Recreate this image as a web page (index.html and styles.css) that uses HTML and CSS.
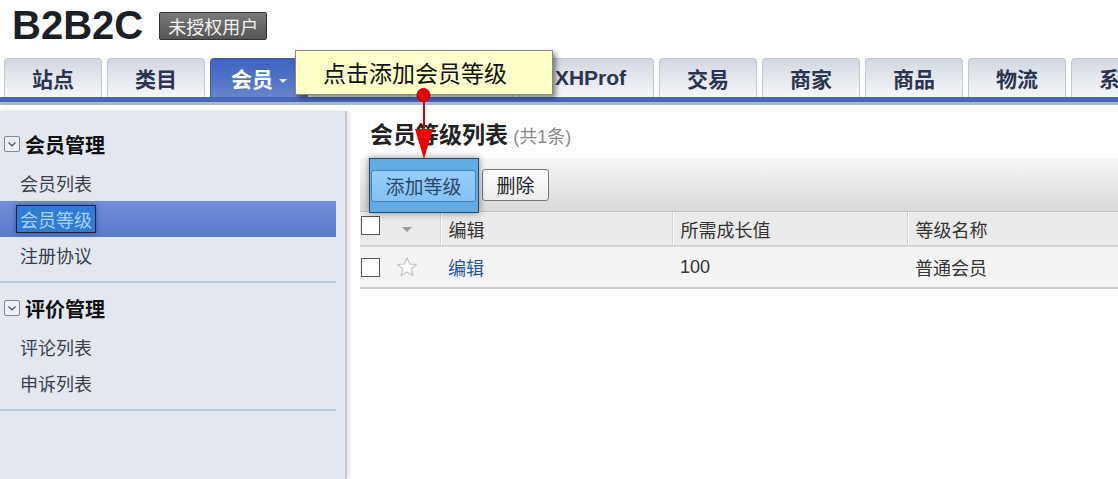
FILE: index.html
```html
<!DOCTYPE html>
<html lang="zh-CN">
<head>
<meta charset="utf-8">
<title>B2B2C 会员等级</title>
<link rel="stylesheet" href="styles.css">
</head>
<body>
<div class="page">
  <header class="top">
    <h1 class="logo">B2B2C</h1>
    <span class="badge">未授权用户</span>
  </header>

  <nav class="tabs">
    <a class="tab">站点</a>
    <a class="tab">类目</a>
    <a class="tab active">会员<span class="caret"></span></a>
    <a class="tab"></a>
    <a class="tab"></a>
    <a class="tab wide">XHProf</a>
    <a class="tab">交易</a>
    <a class="tab">商家</a>
    <a class="tab">商品</a>
    <a class="tab">物流</a>
    <a class="tab">系统</a>
  </nav>
  <div class="band"></div>
  <div class="band-light"></div>

  <div class="layout">
    <aside class="side">
      <div class="group">
        <div class="group-head">
          <svg class="toggle" width="16" height="16" viewBox="0 0 16 16"><rect x="0.5" y="0.5" width="15" height="15" rx="1.5" fill="#eef0f6" stroke="#7d86a3"/><path d="M4.5 6.5 L8 9.8 L11.5 6.5" fill="none" stroke="#4f5a78" stroke-width="1.4"/></svg>
          <span>会员管理</span>
        </div>
        <div class="item">会员列表</div>
        <div class="item selected"><span class="sel-text">会员等级</span></div>
        <div class="item">注册协议</div>
      </div>
      <div class="group">
        <div class="group-head">
          <svg class="toggle" width="16" height="16" viewBox="0 0 16 16"><rect x="0.5" y="0.5" width="15" height="15" rx="1.5" fill="#eef0f6" stroke="#7d86a3"/><path d="M4.5 6.5 L8 9.8 L11.5 6.5" fill="none" stroke="#4f5a78" stroke-width="1.4"/></svg>
          <span>评价管理</span>
        </div>
        <div class="item">评论列表</div>
        <div class="item">申诉列表</div>
      </div>
    </aside>

    <main class="main">
      <h2 class="title">会员等级列表 <span class="count">(共1条)</span></h2>
      <div class="toolbar">
        <span class="highlight"><button class="btn btn-add">添加等级</button></span>
        <button class="btn btn-del">删除</button>
      </div>
      <table class="grid">
        <colgroup>
          <col class="c-sel"><col class="c-edit"><col class="c-val"><col>
        </colgroup>
        <thead>
          <tr>
            <th class="sel"><span class="cb cb-head"></span><span class="sort"></span></th>
            <th>编辑</th>
            <th>所需成长值</th>
            <th>等级名称</th>
          </tr>
        </thead>
        <tbody>
          <tr>
            <td class="sel"><span class="cb"></span><svg class="star" width="22" height="22" viewBox="0 0 22 22"><path d="M11 1.8 L13.7 8 L20.4 8.5 L15.3 12.9 L16.9 19.6 L11 16 L5.1 19.6 L6.7 12.9 L1.6 8.5 L8.3 8 Z" fill="#fdfdfd" stroke="#c4c4c4" stroke-width="1.2" stroke-linejoin="round"/></svg></td>
            <td><a class="link">编辑</a></td>
            <td>100</td>
            <td>普通会员</td>
          </tr>
        </tbody>
      </table>
    </main>
  </div>

  <div class="tip">点击添加会员等级</div>
  <svg class="pointer" width="24" height="80" viewBox="0 0 24 80">
    <line x1="12" y1="8" x2="12" y2="46" stroke="#e00000" stroke-width="2"/>
    <polygon points="3,42 21,42 12,72" fill="#ee0000"/>
    <circle cx="11.5" cy="8" r="6.5" fill="#e60000" stroke="#b00000" stroke-width="1"/>
  </svg>
</div>
</body>
</html>
```

FILE: styles.css
```css
* { box-sizing: border-box; }

html, body {
  margin: 0;
  padding: 0;
  background: #fff;
}

body {
  font-family: "Liberation Sans", "Noto Sans CJK SC", sans-serif;
  color: #333;
  overflow: hidden;
}

.page {
  position: relative;
  width: 1118px;
  height: 479px;
  overflow: hidden;
}

/* header */
.top {
  display: flex;
  align-items: center;
  height: 58px;
  padding: 5px 0 13px 12px;
}

.logo {
  margin: 0;
  font-family: "Liberation Sans", sans-serif;
  font-size: 40px;
  line-height: 40px;
  font-weight: bold;
  color: #1c1f26;
}

.badge {
  margin-left: 16px;
  margin-top: 2px;
  height: 28px;
  padding: 0 8px;
  font-family: "Noto Sans CJK SC", sans-serif;
  font-size: 18px;
  line-height: 26px;
  color: #f2f2f2;
  background: linear-gradient(#7a7a7a, #555);
  border: 1px solid #333;
  border-radius: 2px;
}

/* tabs */
.tabs {
  display: flex;
  gap: 5px;
  height: 39px;
  padding-left: 4px;
  overflow: hidden;
}

.tab {
  flex: 0 0 98px;
  height: 39px;
  border: 1px solid #c2c8d2;
  border-bottom: none;
  border-radius: 4px 4px 0 0;
  background: linear-gradient(#d2d8e1, #e6e9ef 55%, #f5f6f8);
  font-family: "Noto Sans CJK SC", sans-serif;
  font-size: 21px;
  font-weight: bold;
  line-height: 38px;
  text-align: center;
  color: #2b3450;
  white-space: nowrap;
}

.tab.wide {
  flex-basis: 135px;
  font-family: "Liberation Sans", sans-serif;
  font-size: 21px;
  padding-left: 8px;
}

.tab.active {
  background: linear-gradient(#3e62c0, #5475c8 60%, #6684cc);
  border-color: #3b5bb2;
  color: #fff;
}

.caret {
  display: inline-block;
  margin-left: 6px;
  vertical-align: middle;
  border-left: 4px solid transparent;
  border-right: 4px solid transparent;
  border-top: 4px solid #e8ecf6;
}

.band {
  height: 5px;
  background: #4767b7;
}

.band-light {
  height: 3px;
  background: #aab7d4;
  margin-bottom: 6px;
}

/* layout */
.layout {
  display: flex;
  height: 368px;
}

.side {
  flex: 0 0 347px;
  background: #e3e8f0;
  border-right: 2px solid #c6c9ce;
  box-shadow: 2px 0 5px rgba(0, 0, 0, 0.12);
  padding-top: 8px;
}

.group {
  margin-right: 9px;
  padding: 8px 0;
  border-bottom: 2px solid #b9c8de;
}

.group-head {
  display: flex;
  align-items: center;
  gap: 5px;
  height: 34px;
  padding-left: 4px;
  font-family: "Noto Sans CJK SC", sans-serif;
  font-size: 20px;
  font-weight: bold;
  color: #111;
  margin-bottom: 4px;
}

.toggle { flex: 0 0 16px; }

.item {
  height: 36px;
  line-height: 36px;
  padding-left: 20px;
  font-family: "Noto Sans CJK SC", sans-serif;
  font-size: 18px;
  color: #3a3f4a;
}

.item.selected {
  padding-left: 16px;
  background: linear-gradient(#7090da, #5a79c9);
  display: flex;
  align-items: center;
}

.sel-text {
  display: inline-block;
  height: 28px;
  padding: 0 3px;
  line-height: 26px;
  background: #2f7bd6;
  border: 1px solid #1b2638;
  color: #a6d3fa;
  box-shadow: 0 0 5px rgba(10, 20, 60, 0.45);
}

/* main */
.main {
  flex: 1;
  padding-left: 13px;
  padding-top: 7px;
}

.title {
  margin: 0;
  padding-left: 10px;
  height: 30px;
  line-height: 30px;
  font-family: "Noto Sans CJK SC", sans-serif;
  font-size: 23px;
  font-weight: bold;
  color: #222;
}

.count {
  font-family: "Liberation Sans", "Noto Sans CJK SC", sans-serif;
  font-size: 18px;
  font-weight: normal;
  color: #8a8a8a;
}

.toolbar {
  display: flex;
  align-items: center;
  height: 54px;
  margin-top: 10px;
  padding-left: 9px;
  background: linear-gradient(#f7f7f7, #d9d9d9);
  border-bottom: 1px solid #c4c4c4;
}

.highlight {
  align-self: stretch;
  display: flex;
  align-items: center;
  width: 110px;
  padding: 0 1px;
  margin-bottom: -2px;
  background: #62ace6;
  border: 1px solid #2c4866;
  box-shadow: 0 0 7px rgba(0, 0, 0, 0.45);
  position: relative;
  z-index: 1;
}

.btn {
  height: 32px;
  font-family: "Noto Sans CJK SC", sans-serif;
  font-size: 19px;
  line-height: 28px;
  border-radius: 3px;
  cursor: pointer;
}

.btn-add {
  width: 105px;
  padding: 0;
  background: linear-gradient(#95cffc, #82c2f5);
  border: 1px solid #4b80b2;
  color: #2c4766;
}

.btn-del {
  margin-left: 3px;
  width: 67px;
  padding: 0;
  background: linear-gradient(#fff, #ececec);
  border: 1px solid #777;
  color: #222;
}

/* table */
.grid {
  width: 100%;
  border-collapse: collapse;
  font-family: "Liberation Sans", "Noto Sans CJK SC", sans-serif;
  font-size: 18px;
  color: #333;
}

.c-sel { width: 80px; }
.c-edit { width: 232px; }
.c-val { width: 235px; }

.grid th {
  height: 34px;
  padding: 0 0 0 8px;
  text-align: left;
  font-weight: normal;
  background: #eaeaea;
  border-bottom: 1px solid #fbfbfb;
  vertical-align: middle;
}

.grid th + th {
  border-left: 1px solid #d0d0d0;
  box-shadow: inset 1px 0 #fff;
}

.grid td {
  height: 42px;
  padding: 0 0 0 8px;
  background: #f4f4f4;
  border-top: 2px solid #d3d3d3;
  border-bottom: 2px solid #cdcdcd;
  vertical-align: middle;
}

.grid .sel {
  padding-left: 1px;
  white-space: nowrap;
}

.cb {
  display: inline-block;
  width: 19px;
  height: 19px;
  border: 1px solid #555;
  background: #fff;
  vertical-align: middle;
}

.cb-head { position: relative; top: -4px; }

.sort {
  display: inline-block;
  margin-left: 22px;
  vertical-align: middle;
  border-left: 5px solid transparent;
  border-right: 5px solid transparent;
  border-top: 5px solid #9a9a9a;
}

.star {
  margin-left: 16px;
  vertical-align: middle;
}

.link {
  color: #2856a6;
  text-decoration: none;
}

/* annotation overlay */
.tip {
  position: absolute;
  left: 295px;
  top: 50px;
  width: 258px;
  height: 45px;
  padding-left: 27px;
  background: #ffffc9;
  border: 1px solid #8a8a80;
  box-shadow: 3px 3px 5px rgba(0, 0, 0, 0.45);
  font-family: "Noto Sans CJK SC", sans-serif;
  font-size: 23px;
  line-height: 43px;
  color: #111;
  z-index: 5;
}

.pointer {
  position: absolute;
  left: 412px;
  top: 87px;
  z-index: 6;
}
```
